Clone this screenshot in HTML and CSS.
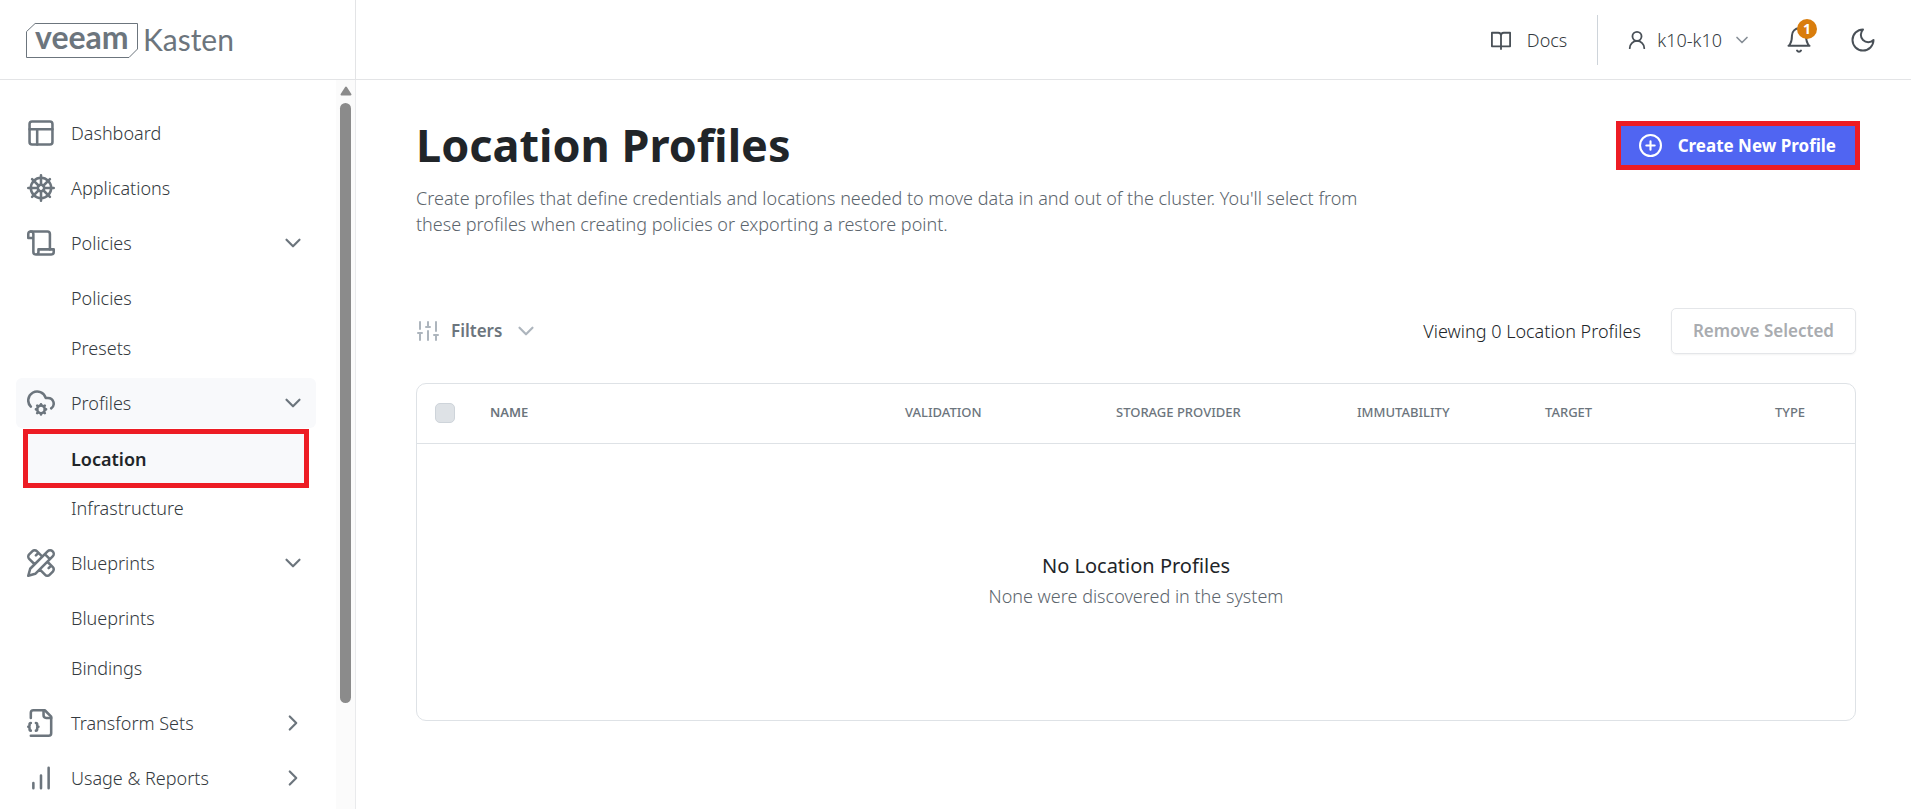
FILE: index.html
```html
<!DOCTYPE html>
<html lang="en">
<head>
<meta charset="utf-8">
<title>Location Profiles</title>
<link rel="stylesheet" href="styles.css">
</head>
<body>
<svg class="defs" aria-hidden="true">
  <symbol id="chevron-down" viewBox="0 0 24 24"><path d="m6 9 6 6 6-6"/></symbol>
  <symbol id="chevron-right" viewBox="0 0 24 24"><path d="m9 18 6-6-6-6"/></symbol>
</svg>
<div class="app">
  <header class="topbar">
    <a class="brand" href="#" aria-label="Veeam Kasten">
      <svg class="logo" viewBox="0 0 220 48">
        <path class="logo-frame" d="M9.500 7.500H111.500V33L103 41.500H.5V16Z"/>
        <text class="logo-veeam" x="9" y="33">veeam</text>
        <text class="logo-kasten" x="117" y="35">Kasten</text>
      </svg>
    </a>
    <div class="tools">
      <a class="docs" href="#">
        <svg class="icon-tool" viewBox="1 1 22 22"><path d="M2 4h7a3 3 0 0 1 3 3v12H2ZM22 4h-7a3 3 0 0 0-3 3v12h10ZM12 19v3"/></svg>
        <span>Docs</span>
      </a>
      <button class="user" type="button">
        <svg class="icon-tool" viewBox="1 1 22 22"><circle cx="12" cy="8" r="5"/><path d="M20 21a8 8 0 0 0-16 0"/></svg>
        <span>k10-k10</span>
        <svg class="icon-small"><use href="#chevron-down"/></svg>
      </button>
      <button class="bell" type="button" aria-label="Notifications">
        <svg class="icon-round" viewBox="0 0 24 24"><path d="M6 8a6 6 0 0 1 12 0c0 7 3 9 3 9H3s3-2 3-9"/><path d="M10.300 21a1.940 1.940 0 0 0 3.400 0"/></svg>
        <span class="badge">1</span>
      </button>
      <button class="theme" type="button" aria-label="Dark mode">
        <svg class="icon-round" viewBox="0 0 24 24"><path d="M12 3a6 6 0 0 0 9 9 9 9 0 1 1-9-9Z"/></svg>
      </button>
    </div>
  </header>

  <aside class="sidebar">
    <nav class="nav">
      <section class="group">
        <a class="row" href="#"><svg class="icon-nav" viewBox="1 1 22 22"><rect x="3" y="3" width="18" height="18" rx="2"/><path d="M3 9h18M9 21V9"/></svg><span>Dashboard</span></a>
      </section>
      <section class="group">
        <a class="row" href="#"><svg class="icon-nav" viewBox="1 1 22 22"><circle cx="12" cy="12" r="8"/><path d="M12 2v7.500M19 5l-5.230 5.230M22 12h-7.500M19 19l-5.230-5.230M12 14.500V22M10.230 13.770 5 19M9.500 12H2M10.230 10.230 5 5"/><circle cx="12" cy="12" r="2.500"/></svg><span>Applications</span></a>
      </section>
      <section class="group">
        <button class="row" type="button"><svg class="icon-nav" viewBox="1 1 22 22"><path d="M8 21h12a2 2 0 0 0 2-2v-2H10v2a2 2 0 1 1-4 0V5a2 2 0 1 0-4 0v3h4"/><path d="M19 17V5a2 2 0 0 0-2-2H4"/></svg><span>Policies</span><svg class="chevron"><use href="#chevron-down"/></svg></button>
        <div class="children">
          <a class="row sub" href="#">Policies</a>
          <a class="row sub" href="#">Presets</a>
        </div>
      </section>
      <section class="group">
        <button class="row open" type="button"><svg class="icon-nav" viewBox="1 1 22 22"><path d="M20 16.200A4.500 4.500 0 0 0 17.500 8h-1.800A7 7 0 1 0 4 14.900"/><circle cx="12" cy="17" r="3"/><path d="M12 13v1M12 20v1M16 17h-1M9 17H8M15 14l-.88.88M9.880 19.120 9 20M15 20l-.88-.88M9.880 14.880 9 14"/></svg><span>Profiles</span><svg class="chevron"><use href="#chevron-down"/></svg></button>
        <div class="children">
          <a class="row sub current" href="#" aria-current="page">Location</a>
          <a class="row sub" href="#">Infrastructure</a>
        </div>
      </section>
      <section class="group">
        <button class="row" type="button"><svg class="icon-nav" viewBox="1 1 22 22"><path d="m15 5 4 4M13 7 8.700 2.700a2.410 2.410 0 0 0-3.400 0L2.700 5.300a2.410 2.410 0 0 0 0 3.400L7 13M8 6l2-2M2 22l5.500-1.500L21.170 6.830a2.820 2.820 0 0 0-4-4L3.500 16.500ZM18 16l2-2M17 11l4.300 4.300c.94.94.94 2.460 0 3.400l-2.600 2.600c-.94.94-2.460.94-3.400 0L11 17"/></svg><span>Blueprints</span><svg class="chevron"><use href="#chevron-down"/></svg></button>
        <div class="children">
          <a class="row sub" href="#">Blueprints</a>
          <a class="row sub" href="#">Bindings</a>
        </div>
      </section>
      <section class="group">
        <button class="row" type="button"><svg class="icon-nav" viewBox="1 1 22 22"><path d="M4 22h14a2 2 0 0 0 2-2V7l-5-5H6a2 2 0 0 0-2 2v4"/><path d="M14 2v4a2 2 0 0 0 2 2h4"/><path d="M4 12a1 1 0 0 0-1 1v1a1 1 0 0 1-1 1 1 1 0 0 1 1 1v1a1 1 0 0 0 1 1M8 18a1 1 0 0 0 1-1v-1a1 1 0 0 1 1-1 1 1 0 0 1-1-1v-1a1 1 0 0 0-1-1"/></svg><span>Transform Sets</span><svg class="chevron"><use href="#chevron-right"/></svg></button>
      </section>
      <section class="group">
        <button class="row" type="button"><svg class="icon-nav" viewBox="1 1 22 22"><path d="M18 20V4M12 20V10M6 20v-4"/></svg><span>Usage &amp; Reports</span><svg class="chevron"><use href="#chevron-right"/></svg></button>
      </section>
    </nav>
    <div class="scrollbar" aria-hidden="true">
      <svg class="scroll-up" viewBox="0 0 12 10"><path d="M6 1.500 10.500 8.500H1.500Z"/></svg>
      <div class="thumb"></div>
    </div>
  </aside>

  <main class="content">
    <div class="heading">
      <div class="intro">
        <h1>Location Profiles</h1>
        <p>Create profiles that define credentials and locations needed to move data in and out of the cluster. You'll select from these profiles when creating policies or exporting a restore point.</p>
      </div>
      <button class="create" type="button">
        <svg class="icon-plus" viewBox="1 1 22 22"><circle cx="12" cy="12" r="10"/><path d="M8 12h8M12 8v8"/></svg>
        <span>Create New Profile</span>
      </button>
    </div>
    <div class="toolbar">
      <button class="filters" type="button">
        <svg class="icon-filter" viewBox="0 0 24 24"><path d="M4 21v-7M4 10V3M12 21v-9M12 8V3M20 21v-5M20 12V3M2 14h4M10 8h4M18 16h4"/></svg>
        <span>Filters</span>
        <svg class="chevron"><use href="#chevron-down"/></svg>
      </button>
      <span class="count">Viewing 0 Location Profiles</span>
      <button class="remove" type="button" disabled>Remove Selected</button>
    </div>
    <div class="card">
      <table>
        <colgroup><col class="c-check"><col class="c-name"><col class="c-valid"><col class="c-store"><col class="c-immut"><col class="c-target"><col class="c-type"></colgroup>
        <thead>
          <tr>
            <th><input type="checkbox" aria-label="Select all" disabled></th>
            <th class="name">Name</th>
            <th>Validation</th>
            <th>Storage Provider</th>
            <th>Immutability</th>
            <th>Target</th>
            <th>Type</th>
          </tr>
        </thead>
        <tbody>
          <tr>
            <td colspan="7">
              <p class="empty-title">No Location Profiles</p>
              <p class="empty-text">None were discovered in the system</p>
            </td>
          </tr>
        </tbody>
      </table>
    </div>
  </main>
</div>
</body>
</html>
```

FILE: styles.css
```css
* { box-sizing: border-box; }

body {
  margin: 0;
  background: #fff;
  color: #212529;
  font: 300 18px/26px "Noto Sans", "Open Sans", sans-serif;
}

h1, p { margin: 0; }
a { color: inherit; text-decoration: none; }
button { padding: 0; border: 0; background: none; color: inherit; font: inherit; }

svg {
  flex: none;
  fill: none;
  stroke: currentColor;
  stroke-width: 2;
  stroke-linecap: round;
  stroke-linejoin: round;
}

.defs { display: none; }

.app {
  display: grid;
  grid-template: 80px 1fr / 356px 1fr;
  height: 100vh;
  overflow: hidden;
}

/* Top bar */
.topbar {
  grid-column: 1 / -1;
  display: flex;
  border-bottom: 1px solid #e3e4e6;
}

.brand {
  display: flex;
  align-items: center;
  width: 356px;
  padding-left: 26px;
  border-right: 1px solid #e3e4e6;
  color: #6c757d;
}

.logo { width: 220px; height: 48px; }
.logo-frame { stroke-width: 1; stroke-linejoin: miter; }
.logo text { fill: currentColor; stroke: none; font-family: Lato, sans-serif; }
.logo-veeam { font-size: 32px; font-weight: 700; }
.logo-kasten { font-size: 30px; font-weight: 400; }

.tools {
  flex: 1;
  display: flex;
  justify-content: flex-end;
  align-items: center;
  padding-right: 34px;
  color: #343a40;
}

.docs, .user { display: flex; align-items: center; }
.docs { gap: 16px; padding-right: 30px; }
.user { gap: 10px; height: 50px; padding-left: 29px; border-left: 1px solid #ced4da; }
.icon-tool { width: 20px; height: 20px; color: #495057; }
.icon-small { width: 20px; height: 20px; color: #868e96; }
.icon-round { display: block; width: 28px; height: 28px; color: #495057; stroke-width: 1.700; }
.bell { position: relative; margin-left: 33px; }
.theme { margin-left: 36px; }

.badge {
  position: absolute;
  top: -7px;
  right: -4px;
  width: 20px;
  height: 20px;
  border-radius: 50%;
  background: #d97d0d;
  color: #fff;
  font-size: 14px;
  font-weight: 700;
  line-height: 20px;
}

/* Sidebar */
.sidebar {
  display: flex;
  min-height: 0;
  border-right: 1px solid #e9eaec;
}

.nav {
  flex: 1;
  display: flex;
  flex-direction: column;
  gap: 5px;
  padding: 28px 20px 0 16px;
  overflow: hidden;
  color: #343a40;
}

.children { display: flex; flex-direction: column; margin-top: 5px; }

.row {
  display: flex;
  flex: none;
  align-items: center;
  gap: 16px;
  width: 100%;
  height: 50px;
  padding: 0 10px 0 11px;
  border-radius: 6px;
  text-align: left;
}

.row span { flex: 1; }
.sub { padding-left: 55px; }
.open { background: #f8f9fb; }

.current {
  width: auto;
  height: 59px;
  margin: -4px 7px -5px;
  padding-left: 43px;
  border: 5px solid #ed1c24;
  border-radius: 0;
  background: #f8f9fb;
  color: #212529;
  font-weight: 600;
}

.icon-nav { width: 28px; height: 28px; color: #6c757d; }
.chevron { width: 26px; height: 26px; color: #6c757d; }

.scrollbar {
  display: flex;
  flex-direction: column;
  align-items: center;
  gap: 7px;
  width: 19px;
  padding-top: 6px;
  background: #fbfbfb;
}

.scroll-up { width: 12px; height: 10px; color: #8b8b8b; fill: #8b8b8b; }
.thumb { width: 11px; height: 83%; border-radius: 6px; background: #8b8b8b; }

/* Content */
.content { min-width: 0; padding: 38px 55px 0 60px; }

.heading { display: flex; justify-content: space-between; align-items: flex-start; }
.intro { max-width: 960px; }
h1 { font-size: 45px; font-weight: 700; line-height: 54px; }
.intro p { margin-top: 13px; color: #5c656d; }

.create {
  display: flex;
  align-items: center;
  gap: 16px;
  height: 49px;
  margin: 3px -4px 0 0;
  padding: 0 19px 0 18px;
  border: 5px solid #ed1c24;
  background: #5065f2;
  color: #fff;
  font-size: 17px;
  font-weight: 700;
}

.icon-plus { width: 23px; height: 23px; }

.toolbar { display: flex; align-items: center; margin-top: 71px; }

.filters {
  display: flex;
  align-items: center;
  gap: 11px;
  color: #6c757d;
  font-size: 17px;
  font-weight: 600;
}

.filters svg { color: #adb5bd; }
.icon-filter { width: 24px; height: 24px; }
.count { margin-left: auto; }

.remove {
  height: 46px;
  margin-left: 30px;
  padding: 0 21px;
  border: 1px solid #e4e6e9;
  border-radius: 5px;
  box-shadow: 0 1px 2px #0000000d;
  color: #a9acb0;
  font-size: 17px;
  font-weight: 600;
}

.card {
  margin-top: 29px;
  border: 1px solid #dee2e6;
  border-radius: 10px;
}

table { width: 100%; border-collapse: collapse; table-layout: fixed; }
th, td { padding: 0; }

th {
  height: 59px;
  padding-bottom: 3px;
  border-bottom: 1px solid #dee2e6;
  color: #6c757d;
  font-size: 13px;
  font-weight: 500;
  line-height: 20px;
  text-align: left;
  text-transform: uppercase;
}

.name { font-weight: 600; }
.c-check { width: 73px; }
.c-name { width: 415px; }
.c-valid { width: 211px; }
.c-store { width: 241px; }
.c-immut { width: 188px; }
.c-target { width: 230px; }

th input {
  appearance: none;
  display: block;
  width: 20px;
  height: 20px;
  margin: 3px 0 0 18px;
  border: 1px solid #ced4da;
  border-radius: 5px;
  background: #dee2e6;
}

td { height: 277px; padding-bottom: 4px; text-align: center; }
.empty-title { font-size: 20px; font-weight: 400; line-height: 30px; }
.empty-text { margin-top: 2px; color: #5c656d; }
```
